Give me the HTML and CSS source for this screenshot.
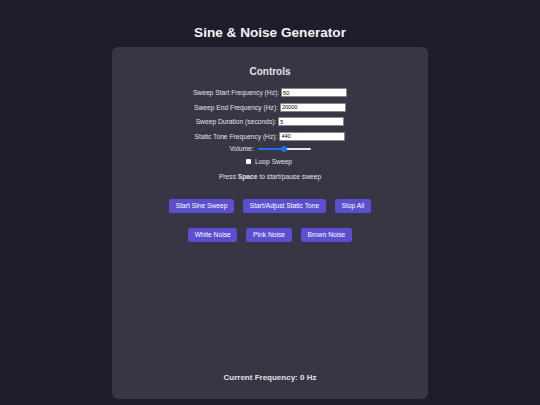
FILE: index.html
```html
<!DOCTYPE html>
<html>
<head>
<meta charset="utf-8">
<title>Sine &amp; Noise Generator</title>
<link rel="stylesheet" href="styles.css">
</head>
<body>
<h1>Sine &amp; Noise Generator</h1>
<div class="panel">
  <h2>Controls</h2>
  <div class="row">
    <label for="startFreq">Sweep Start Frequency (Hz):</label>
    <input type="text" id="startFreq" value="50">
  </div>
  <div class="row">
    <label for="endFreq">Sweep End Frequency (Hz):</label>
    <input type="text" id="endFreq" value="20000">
  </div>
  <div class="row">
    <label for="duration">Sweep Duration (seconds):</label>
    <input type="text" id="duration" value="5">
  </div>
  <div class="row">
    <label for="staticFreq">Static Tone Frequency (Hz):</label>
    <input type="text" id="staticFreq" value="440">
  </div>
  <div class="row vol">
    <label for="volume">Volume:</label>
    <input type="range" id="volume" min="0" max="1" step="0.01" value="0.5">
  </div>
  <div class="row loop">
    <input type="checkbox" id="loop">
    <label for="loop">Loop Sweep</label>
  </div>
  <p class="hint">Press <b>Space</b> to start/pause sweep</p>
  <div class="buttons first">
    <button>Start Sine Sweep</button>
    <button>Start/Adjust Static Tone</button>
    <button>Stop All</button>
  </div>
  <div class="buttons">
    <button>White Noise</button>
    <button>Pink Noise</button>
    <button>Brown Noise</button>
  </div>
  <p class="current">Current Frequency: <span id="freq">0</span> Hz</p>
</div>
</body>
</html>
```

FILE: styles.css
```css
*{
  box-sizing:border-box;
}
body{
  margin:0;
  background:#1f1c2c;
  color:#e4e4e8;
  font-family:"Liberation Sans", Arial, sans-serif;
  font-size:6.7px;
}
h1{
  margin:25px 0 7.4px;
  text-align:center;
  font-size:13.6px;
  color:#f4f4f6;
}
.panel{
  width:316px;
  height:352px;
  margin:0 auto;
  padding:19px 0 17px;
  background:#383544;
  border-radius:6px;
  display:flex;
  flex-direction:column;
  align-items:center;
}
h2{
  margin:0 0 10.5px;
  font-size:10px;
  line-height:11.5px;
}
.row{
  display:flex;
  align-items:center;
  justify-content:center;
  height:9px;
  margin-bottom:5.5px;
}
.row label{
  margin-right:2px;
}
input[type=text]{
  width:66px;
  height:9px;
  padding:0 1px;
  border:0.5px solid #888;
  border-radius:1px;
  background:#fff;
  color:#000;
  font-family:"Liberation Sans", Arial, sans-serif;
  font-size:5.5px;
}
.vol{
  height:7px;
  margin-top:-1px;
  margin-bottom:6px;
}
.vol label{
  margin-right:4px;
}
input[type=range]{
  -webkit-appearance:none;
  appearance:none;
  width:53px;
  height:2.2px;
  margin:0;
  border-radius:2px;
  background:linear-gradient(to right, #1a73e8 50%, #e6e6ea 50%);
}
input[type=range]::-webkit-slider-thumb{
  -webkit-appearance:none;
  width:5.5px;
  height:5.5px;
  border-radius:50%;
  background:#1a73e8;
}
.loop{
  height:7px;
  margin-bottom:0;
}
input[type=checkbox]{
  -webkit-appearance:none;
  appearance:none;
  width:5px;
  height:5px;
  margin:0 4px 0 0;
  background:#fff;
  border-radius:1px;
}
.hint{
  margin:7.5px 0 0;
  line-height:7.7px;
}
.buttons{
  display:flex;
  justify-content:center;
  gap:9px;
  margin-top:15px;
}
.buttons.first{
  margin-top:18.3px;
}
button{
  height:14px;
  padding:0 6.7px;
  border:none;
  border-radius:2.5px;
  background:#5a4fcf;
  color:#fff;
  font-family:"Liberation Sans", Arial, sans-serif;
  font-size:6.7px;
  cursor:pointer;
}
.current{
  margin:auto 0 0;
  font-size:8px;
  font-weight:bold;
  line-height:9.2px;
}
```
